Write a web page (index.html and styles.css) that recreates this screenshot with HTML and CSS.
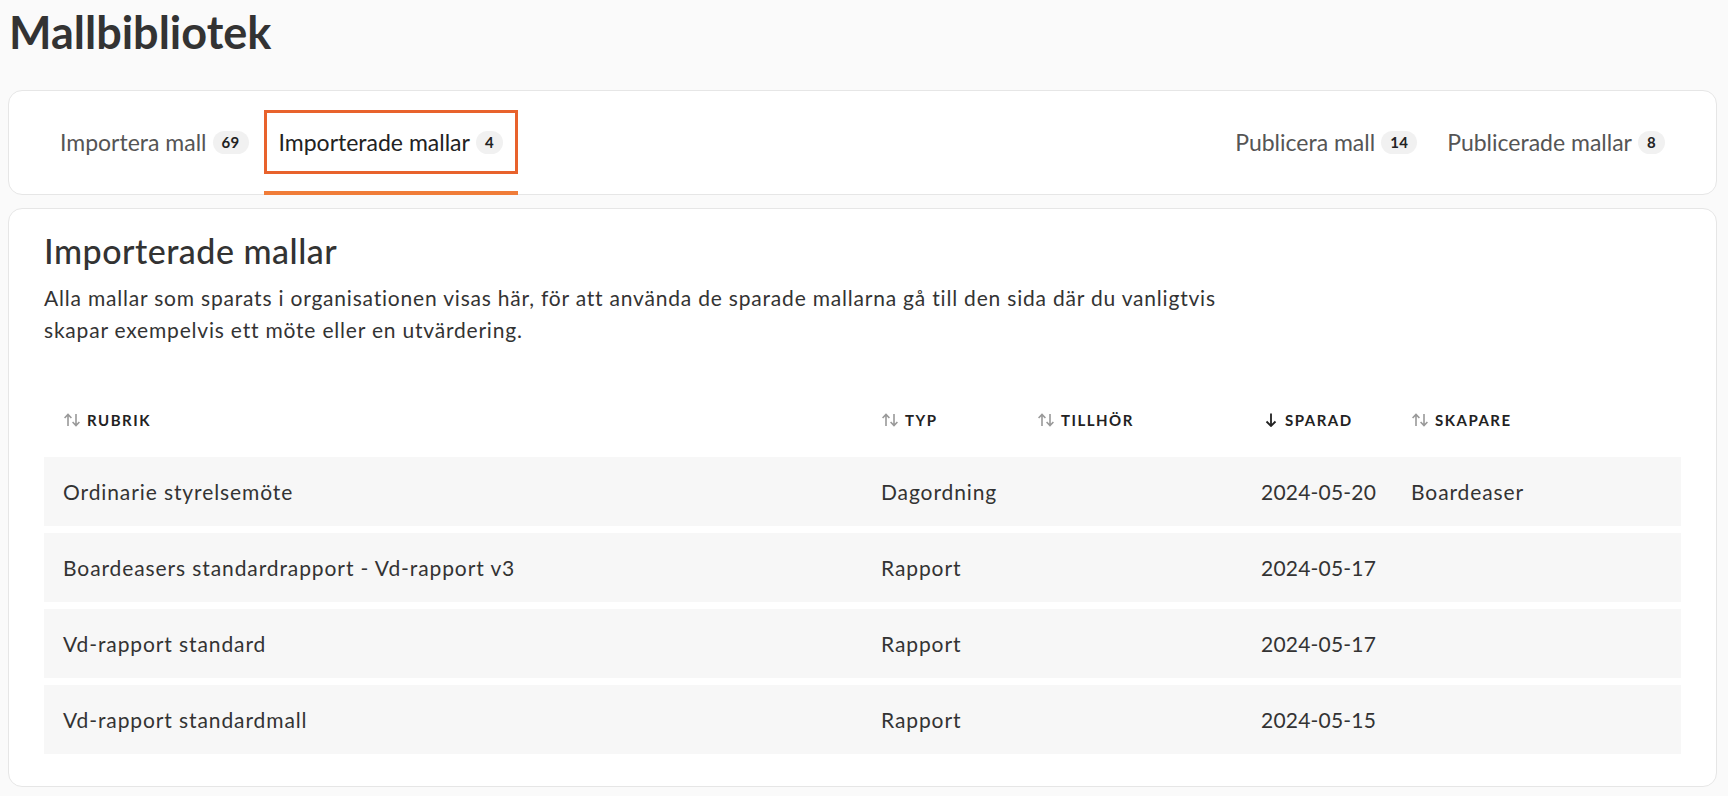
FILE: index.html
```html
<!DOCTYPE html>
<html lang="sv">
<head>
    <meta charset="UTF-8">
    <meta name="viewport" content="width=device-width, initial-scale=1.0">
    <title>Mallbibliotek</title>
    <link rel="stylesheet" href="styles.css">
</head>
<body>
    <div class="page">
        <h1 class="page-title">Mallbibliotek</h1>

        <!-- Flikar -->
        <div class="tabs-card">
            <div class="tab-group">
                <div class="tab">
                    <button class="tab-btn">Importera mall <span class="badge">69</span></button>
                </div>
                <div class="tab active">
                    <button class="tab-btn">Importerade mallar <span class="badge">4</span></button>
                </div>
            </div>
            <div class="tab-group">
                <div class="tab">
                    <button class="tab-btn">Publicera mall <span class="badge">14</span></button>
                </div>
                <div class="tab">
                    <button class="tab-btn">Publicerade mallar <span class="badge">8</span></button>
                </div>
            </div>
        </div>

        <!-- Innehåll -->
        <div class="content-card">
            <h2>Importerade mallar</h2>
            <p class="intro">Alla mallar som sparats i organisationen visas här, för att använda de sparade mallarna gå till den sida där du vanligtvis skapar exempelvis ett möte eller en utvärdering.</p>

            <table class="templates">
                <colgroup>
                    <col class="col-title">
                    <col class="col-type">
                    <col class="col-owner">
                    <col class="col-date">
                    <col>
                </colgroup>
                <thead>
                    <tr>
                        <th><span class="sort"><svg viewBox="0 0 18 14"><path d="M5 13V1.5M1.6 5 5 1.5 8.4 5M13 1v11.5M9.6 9 13 12.5 16.4 9"/></svg></span>Rubrik</th>
                        <th><span class="sort"><svg viewBox="0 0 18 14"><path d="M5 13V1.5M1.6 5 5 1.5 8.4 5M13 1v11.5M9.6 9 13 12.5 16.4 9"/></svg></span>Typ</th>
                        <th><span class="sort"><svg viewBox="0 0 18 14"><path d="M5 13V1.5M1.6 5 5 1.5 8.4 5M13 1v11.5M9.6 9 13 12.5 16.4 9"/></svg></span>Tillhör</th>
                        <th><span class="sort active"><svg viewBox="0 0 18 14"><path d="M10 0.5v12.5M5.5 8.5 10 13 14.5 8.5"/></svg></span>Sparad</th>
                        <th><span class="sort"><svg viewBox="0 0 18 14"><path d="M5 13V1.5M1.6 5 5 1.5 8.4 5M13 1v11.5M9.6 9 13 12.5 16.4 9"/></svg></span>Skapare</th>
                    </tr>
                </thead>
                <tbody>
                    <tr>
                        <td>Ordinarie styrelsemöte</td>
                        <td>Dagordning</td>
                        <td></td>
                        <td class="date">2024-05-20</td>
                        <td>Boardeaser</td>
                    </tr>
                    <tr>
                        <td>Boardeasers standardrapport - Vd-rapport v3</td>
                        <td>Rapport</td>
                        <td></td>
                        <td class="date">2024-05-17</td>
                        <td></td>
                    </tr>
                    <tr>
                        <td>Vd-rapport standard</td>
                        <td>Rapport</td>
                        <td></td>
                        <td class="date">2024-05-17</td>
                        <td></td>
                    </tr>
                    <tr>
                        <td>Vd-rapport standardmall</td>
                        <td>Rapport</td>
                        <td></td>
                        <td class="date">2024-05-15</td>
                        <td></td>
                    </tr>
                </tbody>
            </table>
        </div>
    </div>
</body>
</html>
```

FILE: styles.css
```css
body {
    font-family: Lato, "Open Sans", Arial, sans-serif;
    background-color: #fafafa;
    color: #333;
    margin: 0;
    padding: 0;
}
.page {
    margin: 0 11px 0 8px;
}
.page-title {
    font-size: 45px;
    font-weight: 700;
    line-height: 54px;
    margin: 5px 0 31px 1px;
    color: #333;
}

/* Flikar */
.tabs-card {
    display: flex;
    justify-content: space-between;
    background-color: #fff;
    border: 1px solid #e6e6e6;
    border-radius: 14px;
    padding: 19px 36px 0 36px;
}
.tab-group {
    display: flex;
}
.tab {
    padding-bottom: 17px;
    border-bottom: 4px solid transparent;
    margin-bottom: -1px;
}
.tab.active {
    border-bottom-color: #f07c38;
}
.tab-btn {
    display: flex;
    align-items: center;
    height: 64px;
    padding: 0 12px;
    border: 3px solid transparent;
    background: none;
    font-family: inherit;
    font-size: 23px;
    color: #555;
    cursor: pointer;
}
.tab.active .tab-btn {
    border-color: #e8622c;
    color: #222;
}
.badge {
    display: inline-block;
    margin-left: 6px;
    padding: 0 9px;
    height: 23px;
    line-height: 23px;
    border-radius: 12px;
    background-color: #f1f1f1;
    color: #222;
    font-size: 15px;
    font-weight: 700;
    letter-spacing: 0.3px;
}

/* Innehåll */
.content-card {
    margin-top: 13px;
    background-color: #fff;
    border: 1px solid #e6e6e6;
    border-radius: 14px;
    padding: 22px 35px 25px 35px;
}
.content-card h2 {
    font-size: 34px;
    font-weight: 500;
    line-height: 40px;
    letter-spacing: 0.5px;
    margin: 0 0 11px 0;
    color: #333;
}
.intro {
    font-size: 21px;
    line-height: 32px;
    letter-spacing: 0.8px;
    max-width: 1200px;
    margin: 0 0 37px 0;
}

/* Tabell */
.templates {
    width: 100%;
    table-layout: fixed;
    border-collapse: separate;
    border-spacing: 0 7px;
}
.col-title { width: 818px; }
.col-type { width: 156px; }
.col-owner { width: 224px; }
.col-date { width: 150px; }
.templates th {
    text-align: left;
    padding: 20px 0 20px 19px;
    font-size: 15px;
    line-height: 20px;
    font-weight: 700;
    letter-spacing: 1.5px;
    text-transform: uppercase;
    color: #222;
}
.sort {
    display: inline-block;
    width: 18px;
    height: 14px;
    margin-right: 6px;
    vertical-align: -1px;
}
.sort svg {
    display: block;
    width: 18px;
    height: 14px;
    fill: none;
    stroke: #999;
    stroke-width: 1.6;
}
.sort.active svg {
    stroke: #222;
    stroke-width: 1.8;
}
.templates td {
    background-color: #f7f7f7;
    height: 69px;
    padding: 0 0 0 19px;
    font-size: 21px;
    letter-spacing: 0.9px;
    color: #333;
    white-space: nowrap;
}
.templates td.date {
    letter-spacing: 0.2px;
}
```
